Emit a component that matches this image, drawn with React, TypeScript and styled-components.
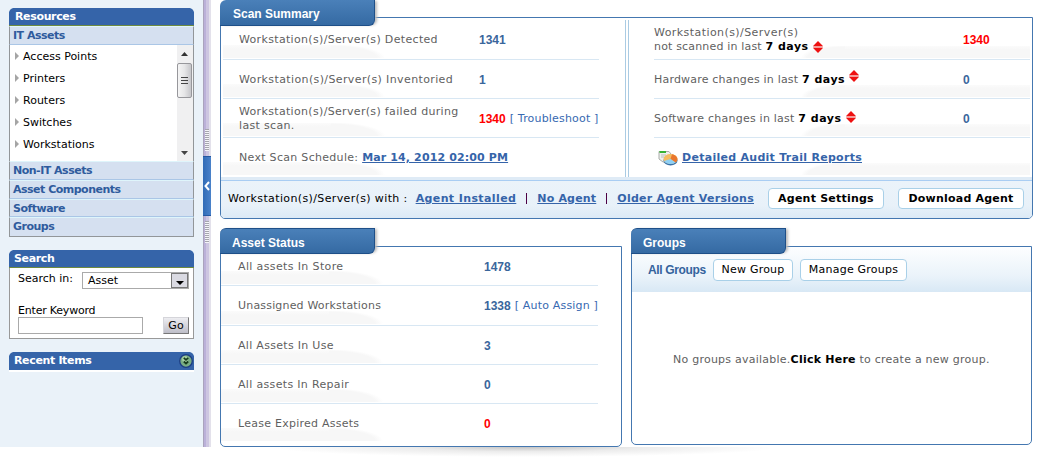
import type { ReactNode } from 'react'
import styled, { createGlobalStyle, css } from 'styled-components'

const verdana = `Verdana, 'DejaVu Sans', sans-serif`
const arial = `'Liberation Sans', Arial, sans-serif`

const resources = ['Access Points', 'Printers', 'Routers', 'Switches', 'Workstations']

const assetStatus = [
  { label: 'All assets In Store', value: '1478', spacing: 0.37 },
  { label: 'Unassigned Workstations', value: '1338', action: 'Auto Assign', spacing: 0.18 },
  { label: 'All Assets In Use', value: '3', spacing: 0.3 },
  { label: 'All assets In Repair', value: '0', spacing: 0.33 },
  { label: 'Lease Expired Assets', value: '0', alert: true, spacing: 0.25 },
]

const UpDown = ({ drop = 0 }: { drop?: number }) => (
  <Arrows $drop={drop} width="10" height="12" viewBox="0 0 10 12">
    <path d="M5 0 L9.7 4.7 V5.6 H0.3 V4.7 Z M0.3 6.4 H9.7 V7.3 L5 12 L0.3 7.3 Z" fill="#ee1111" />
    <path d="M0.3 6 H9.7" stroke="#f3b0ac" />
  </Arrows>
)

const ReportIcon = () => (
  <svg width="20" height="16" viewBox="0 0 20 16">
    <path d="M1 1.5 H11 L13 4 V12 H5 L1 9 Z" fill="#eef0ee" stroke="#a9aca9" />
    <path d="M1.5 1 H8 V3 H1.5 Z" fill="#35b234" />
    <path d="M3 5 H8 M3 7 H6" stroke="#b9bdb9" />
    <ellipse cx="12.5" cy="10.5" rx="7" ry="5" fill="#3c72a8" />
    <ellipse cx="12.5" cy="9" rx="7" ry="5" fill="#f3bd63" />
    <path d="M12.5 9 L14 4.2 A7 5 0 0 1 17.5 12.5 Z" fill="#e9772d" />
    <path d="M12.5 9 L17.5 12.5 A7 5 0 0 1 6 11 Z" fill="#8ed0f5" />
  </svg>
)

const ExpandIcon = () => (
  <svg width="14" height="14" viewBox="0 0 14 14">
    <circle cx="7" cy="7" r="6.3" fill="#79ad83" stroke="#1c3c84" strokeWidth="1.3" />
    <circle cx="6" cy="5" r="3" fill="#a4cda1" />
    <path d="M4.8 3.8 L7 5.8 L9.2 3.8 M4.8 7.5 L7 9.5 L9.2 7.5" fill="none" stroke="#173c1e" strokeWidth="1.7" />
  </svg>
)

type PanelProps = { title: string; children: ReactNode; height: number; overlap?: number }

const Panel = ({ title, children, height, overlap = 8 }: PanelProps) => (
  <PanelWrap>
    <Tab $raised={overlap > 8}>{title}</Tab>
    <PanelBody $height={height} $overlap={overlap}>
      {children}
    </PanelBody>
  </PanelWrap>
)

const Sidebar = () => (
  <Side>
    <Box>
      <BoxTitle $indent={6}>Resources</BoxTitle>
      <Category $height={19}>IT Assets</Category>
      <ListArea>
        <List>
          {resources.map((item) => (
            <Item key={item}>
              <svg width="4" height="8" viewBox="0 0 4 8">
                <path d="M0 0 L4 4 L0 8 Z" fill="#a5a5a5" />
              </svg>
              {item}
            </Item>
          ))}
        </List>
        <ScrollBar>
          <svg width="7" height="4" viewBox="0 0 7 4">
            <path d="M0 4 L3.5 0 L7 4 Z" fill="#333" />
          </svg>
          <Thumb>
            <i />
            <i />
            <i />
          </Thumb>
          <svg width="7" height="4" viewBox="0 0 7 4">
            <path d="M0 0 H7 L3.5 4 Z" fill="#444" />
          </svg>
        </ScrollBar>
      </ListArea>
      <Category $height={19}>Non-IT Assets</Category>
      <Category $height={19}>Asset Components</Category>
      <Category $height={18}>Software</Category>
      <Category $height={20}>Groups</Category>
    </Box>

    <Box>
      <BoxTitle $indent={5}>Search</BoxTitle>
      <SearchForm>
        <SearchRow>
          <span>Search in:</span>
          <Select>
            Asset
            <SelectButton>
              <svg width="8" height="4" viewBox="0 0 8 4">
                <path d="M0 0 H8 L4 4 Z" fill="#000" />
              </svg>
            </SelectButton>
          </Select>
        </SearchRow>
        <FieldLabel htmlFor="keyword">Enter Keyword</FieldLabel>
        <KeywordRow>
          <Keyword id="keyword" />
          <Go>Go</Go>
        </KeywordRow>
      </SearchForm>
    </Box>

    <RecentItems>
      Recent Items
      <ExpandIcon />
    </RecentItems>
  </Side>
)

const App = () => (
  <>
    <GlobalStyle />
    <Page>
      <Sidebar />
      <Splitter>
        <Grip />
        <Handle>
          <svg width="6" height="10" viewBox="0 0 6 10">
            <path d="M5 1 L1.5 5 L5 9" fill="none" stroke="#fff" strokeWidth="2" />
          </svg>
        </Handle>
        <Grip />
      </Splitter>
      <Main>
        <Panel title="Scan Summary" height={202} overlap={9}>
          <Summary>
            <Column $side="left">
              <Row $height={40}>
                <Label $spacing={0.33}>Workstation(s)/Server(s) Detected</Label>
                <Value>1341</Value>
              </Row>
              <Row $height={39}>
                <Label $spacing={0.38}>Workstation(s)/Server(s) Inventoried</Label>
                <Value>1</Value>
              </Row>
              <Row $height={39}>
                <Label $spacing={0.33}>
                  Workstation(s)/Server(s) failed during
                  <br />
                  last scan.
                </Label>
                <Value $alert>1340</Value>
                <Action>[ Troubleshoot ]</Action>
              </Row>
              <Row $height={39} $last>
                <Label $spacing={0.3}>
                  Next Scan Schedule: <Link $spacing={0.13}>Mar 14, 2012 02:00 PM</Link>
                </Label>
              </Row>
            </Column>
            <Divider />
            <Column $side="right">
              <Row $height={40} $side="right">
                <Label $spacing={0.17}>
                  <Wide>Workstation(s)/Server(s)</Wide>
                  <br />
                  not scanned in last <Days>7 days</Days> <UpDown drop={1} />
                </Label>
                <Value $alert>1340</Value>
              </Row>
              <Row $height={39} $side="right">
                <Label $spacing={0.19}>
                  Hardware changes in last <Days>7 days</Days> <UpDown drop={-1} />
                </Label>
                <Value>0</Value>
              </Row>
              <Row $height={39} $side="right">
                <Label $spacing={0.23}>
                  Software changes in last <Days>7 days</Days> <UpDown />
                </Label>
                <Value>0</Value>
              </Row>
              <Row $height={39} $side="right" $last>
                <Report>
                  <ReportIcon />
                  <Link $spacing={0.28}>Detailed Audit Trail Reports</Link>
                </Report>
              </Row>
            </Column>
          </Summary>
          <AgentBar>
            <AgentLabel>Workstation(s)/Server(s) with :</AgentLabel>
            <AgentLinks>
              <Link $spacing={0.39}>Agent Installed</Link>
              <Pipe />
              <Link $spacing={0.18}>No Agent</Link>
              <Pipe />
              <Link $spacing={0.26}>Older Agent Versions</Link>
            </AgentLinks>
            <AgentButtons>
              <Button $bold $width={116}>
                Agent Settings
              </Button>
              <Button $bold $width={126}>
                Download Agent
              </Button>
            </AgentButtons>
          </AgentBar>
        </Panel>

        <Bottom>
          <Panel title="Asset Status" height={201}>
            <StatusRows>
              {assetStatus.map(({ label, value, action, alert, spacing }, i) => (
                <Row key={label} $height={i === 1 ? 40 : 39} $last={i === 4} $pad={17}>
                  <Label $spacing={spacing}>{label}</Label>
                  <Value $alert={alert}>{value}</Value>
                  {action && <Action>[ {action} ]</Action>}
                </Row>
              ))}
            </StatusRows>
          </Panel>
          <Panel title="Groups" height={199}>
            <GroupBar>
              <GroupTitle>All Groups</GroupTitle>
              <Button $width={80}>New Group</Button>
              <Button $width={107}>Manage Groups</Button>
            </GroupBar>
            <Empty>
              No groups available.<b>Click Here</b> to create a new group.
            </Empty>
          </Panel>
        </Bottom>
        <Shadow />
      </Main>
    </Page>
  </>
)

export default App

const GlobalStyle = createGlobalStyle`
  * {
    box-sizing: border-box;
  }
  body {
    margin: 0;
    background: #fff;
    font-family: ${verdana};
    font-size: 11px;
    line-height: 14px;
    color: #5f5f5f;
    overflow: hidden;
  }
  b {
    color: #000;
  }
`

const Page = styled.div`
  display: flex;
  width: 1037px;
  height: 457px;
  overflow: hidden;
`

const Side = styled.aside`
  display: flex;
  flex-direction: column;
  gap: 13px;
  width: 203px;
  height: 447px;
  padding: 8px 9px;
  background: #eaf2f9;
  color: #000;
`

const Box = styled.section`
  width: 185px;
`

const titleStyle = css`
  background: #3564a9;
  color: #fff;
  font-weight: bold;
  letter-spacing: -0.35px;
  clip-path: polygon(0 4px, 1px 2px, 2px 1px, 4px 0, calc(100% - 4px) 0, calc(100% - 2px) 1px, calc(100% - 1px) 2px, 100% 4px, 100% 100%, 0 100%);
`

const BoxTitle = styled.h2<{ $indent: number }>`
  ${titleStyle}
  height: 18px;
  margin: 0;
  padding-left: ${({ $indent }) => $indent}px;
  font-size: 11px;
  line-height: 18px;
  border-bottom: 1px solid #6f8a3f;
`

const Category = styled.div<{ $height: number }>`
  height: ${({ $height }) => $height}px;
  padding-left: 3px;
  line-height: 18px;
  font-weight: bold;
  letter-spacing: -0.5px;
  color: #2f5b9d;
  background: #d5e0f0;
  border: 1px solid #aac6e6;
  border-top-color: #dff5fb;
  border-left-color: #929699;
  border-right-color: #929699;

  &:last-child {
    border-bottom-color: #929699;
  }
`

const ListArea = styled.div`
  display: flex;
  justify-content: space-between;
  height: 116px;
  background: #fff;
  border: solid #929699;
  border-width: 0 1px;
`

const List = styled.div`
  padding-top: 1px;
`

const Item = styled.div`
  display: flex;
  align-items: center;
  gap: 4px;
  height: 22px;
  padding-left: 5px;

  svg {
    margin-top: -2px;
  }
`

const ScrollBar = styled.div`
  display: flex;
  flex-direction: column;
  align-items: center;
  width: 16px;
  padding: 7px 1px 6px 0;
  background: #f0f0f1;

  > svg:last-child {
    margin-top: auto;
  }
`

const Thumb = styled.div`
  display: flex;
  flex-direction: column;
  align-items: center;
  justify-content: center;
  gap: 2px;
  width: 15px;
  height: 35px;
  margin-top: 7px;
  background: linear-gradient(90deg, #f5f5f5, #e6e6e7 50%, #c6c6ca);
  border: 1px solid #97979b;
  border-radius: 2px;

  i {
    width: 7px;
    height: 1px;
    background: #444;
  }
`

const SearchForm = styled.div`
  height: 71px;
  padding: 4px 4px 0 8px;
  background: #fff;
  border: 1px solid #999;
  border-top: 0;
`

const SearchRow = styled.div`
  display: flex;
  justify-content: space-between;
  height: 32px;
`

const Select = styled.div`
  display: flex;
  align-items: center;
  justify-content: space-between;
  width: 107px;
  height: 17px;
  padding-left: 5px;
  border: 1px solid #aaa;
`

const SelectButton = styled.span`
  display: flex;
  align-items: flex-end;
  justify-content: center;
  width: 17px;
  height: 15px;
  padding-bottom: 2px;
  background: #dadae2;
  border: 1px solid #777;
`

const FieldLabel = styled.label`
  display: block;
  height: 13px;
  letter-spacing: -0.2px;
`

const KeywordRow = styled.div`
  display: flex;
  justify-content: space-between;
`

const Keyword = styled.input`
  width: 125px;
  height: 17px;
  margin: 0;
  border: 1px solid #aaa;
`

const Go = styled.button`
  width: 26px;
  height: 17px;
  padding: 0;
  font: 11px/14px ${verdana};
  color: #000;
  background: linear-gradient(#ededf1, #bebec8);
  border: 1px solid #d5d5da;
  border-right-color: #777;
  border-bottom-color: #777;
`

const RecentItems = styled.div`
  ${titleStyle}
  display: flex;
  align-items: center;
  justify-content: space-between;
  width: 185px;
  height: 20px;
  padding: 0 1px 0 5px;
  border-bottom: 2px solid #fff;
`

const Splitter = styled.div`
  display: flex;
  flex-direction: column;
  width: 8px;
  height: 447px;
  padding-top: 129px;
  background: linear-gradient(90deg, #aaa3bd 0 1px, #bbb1d9 1px 3px, #cdc6e1 3px 6px, #e3e1eb 6px);
`

const Grip = styled.div`
  width: 4px;
  height: 22px;
  margin: 0 0 5px 2px;
  background: repeating-linear-gradient(#a6a6ae 0 1px, #f4f4f8 1px 2px);

  &:last-child {
    margin-top: 5px;
  }
`

const Handle = styled.div`
  display: flex;
  align-items: center;
  justify-content: center;
  height: 60px;
  background: linear-gradient(90deg, #316bb6, #4a82ca);
  border: 1px solid #2458a2;
  border-width: 1px 0;
`

const Main = styled.main`
  display: flex;
  flex-direction: column;
  width: 826px;
  padding: 0 4px 0 9px;
`

const PanelWrap = styled.section`
  min-width: 0;
`

const Tab = styled.h2<{ $raised: boolean }>`
  position: relative;
  z-index: 1;
  width: 155px;
  height: 26px;
  margin: 0;
  padding-left: ${({ $raised }) => ($raised ? 13 : 12)}px;
  font: bold 12px/28px ${arial};
  color: #fff;
  background: linear-gradient(#4a80b9, #356aa3);
  border: 1px solid #1e4f88;
  border-width: ${({ $raised }) => ($raised ? 0 : 1)}px 1px 1px 0;
  border-radius: 6px 0 6px 0;
  box-shadow: 3px 0 3px -1px #bbb;
`

const PanelBody = styled.div<{ $height: number; $overlap: number }>`
  height: ${({ $height }) => $height}px;
  margin-top: -${({ $overlap }) => $overlap}px;
  border: 1px solid #4477b0;
  border-radius: 0 0 5px 5px;
  overflow: hidden;
`

const Summary = styled.div`
  display: flex;
  height: 159px;
  padding: 2px 1px 0 2px;
`

const Column = styled.div<{ $side: 'left' | 'right' }>`
  width: 376px;
  margin-left: ${({ $side }) => ($side === 'right' ? 25 : 0)}px;
`

const Divider = styled.div`
  width: 4px;
  height: 157px;
  margin-left: 26px;
  border: solid #aacbe3;
  border-width: 0 1px;
`

const Label = styled.span<{ $spacing: number }>`
  line-height: 14px;
  letter-spacing: ${({ $spacing }) => $spacing}px;
  white-space: nowrap;
`

const Wide = styled.span`
  letter-spacing: 0.43px;
`

const Days = styled.b`
  letter-spacing: 0.5px;
`

const Value = styled.span<{ $alert?: boolean }>`
  font: bold 12px/14px ${arial};
  color: ${({ $alert }) => ($alert ? '#f00' : '#3a669c')};
`

const shadeLeft = css`
  background:
    radial-gradient(ellipse 54px 14px at left bottom, #f7f7f7 85%, #f7f7f700) 108px calc(100% - 1px) / 55px 13px no-repeat,
    linear-gradient(#fbfbfb, #f7f7f7 30%) 0 calc(100% - 1px) / 108px 13px no-repeat;
`

const shadeRight = css`
  background:
    radial-gradient(ellipse 44px 13px at right bottom, #f7f7f7 85%, #f7f7f700) 146px calc(100% - 1px) / 45px 12px no-repeat,
    linear-gradient(#fbfbfb, #f7f7f7 30%) 191px calc(100% - 1px) / 185px 12px no-repeat;
`

const Row = styled.div<{ $height: number; $side?: 'right'; $last?: boolean; $pad?: number }>`
  display: flex;
  align-items: center;
  height: ${({ $height }) => $height}px;
  padding-top: ${({ $height }) => ($height === 39 ? 1 : 0)}px;
  padding-left: ${({ $side, $pad }) => ($side ? 0 : $pad ?? 16)}px;
  ${({ $side }) => ($side ? shadeRight : shadeLeft)}
  border-bottom: 1px solid ${({ $last }) => ($last ? 'transparent' : '#d8e7f3')};
  white-space: nowrap;

  > ${Label} {
    flex: none;
    width: ${({ $side, $pad }) => ($side ? 309 : $pad ? 246 : 240)}px;
  }
`

const Action = styled.span`
  margin-left: 4px;
  letter-spacing: 0.18px;
  color: #3769b1;
`

const Link = styled.a<{ $spacing: number }>`
  color: #3564a9;
  font-weight: bold;
  letter-spacing: ${({ $spacing }) => $spacing}px;
  text-decoration: underline;
`

const Arrows = styled.svg<{ $drop: number }>`
  margin: -4px 0 ${({ $drop }) => -$drop}px 0.5px;
  vertical-align: ${({ $drop }) => -1 - $drop}px;
`

const Report = styled.div`
  display: flex;
  align-items: center;
  gap: 4px;
  padding-left: 4px;
`

const AgentBar = styled.div`
  display: flex;
  align-items: center;
  height: 41px;
  padding: 2px 8px 0 7px;
  color: #000;
  background: linear-gradient(#dfebf6 0 3px, #a9cdf3 3px 4px, #ebf3fa 4px, #e8f1f9 70%, #dceaf6);
`

const AgentLabel = styled.span`
  letter-spacing: 0.37px;
`

const AgentLinks = styled.div`
  display: flex;
  align-items: center;
  margin-left: 8px;
`

const Pipe = styled.i`
  width: 1px;
  height: 11px;
  margin: 0 10px;
  background: #4c0044;
`

const AgentButtons = styled.div`
  display: flex;
  gap: 14px;
  margin-left: auto;
`

const Button = styled.button<{ $bold?: boolean; $width: number }>`
  width: ${({ $width }) => $width}px;
  height: ${({ $bold }) => ($bold ? 21 : 22)}px;
  padding: 0;
  font: ${({ $bold }) => ($bold ? 'bold' : 'normal')} 11px/14px ${verdana};
  letter-spacing: 0.22px;
  color: #000;
  background: #fff;
  border: 1px solid #a9d0e8;
  border-radius: 4px;
  white-space: nowrap;
`

const Bottom = styled.div`
  display: grid;
  grid-template-columns: 402px 401px;
  gap: 9px;
  height: 219px;
  margin-top: 9px;
`

const StatusRows = styled.div`
  width: 377px;

  ${Row} {
    padding-top: 2px;
  }
  ${Row}:nth-child(2) {
    padding-top: 0;
  }
`

const GroupBar = styled.div`
  display: flex;
  align-items: center;
  gap: 7px;
  height: 45px;
  padding: 1px 0 0 16px;
  background: linear-gradient(#fdfeff, #eaf3fa 65%, #d8e8f5);
`

const GroupTitle = styled.span`
  width: 58px;
  font: bold 12px/14px ${arial};
  letter-spacing: -0.35px;
  color: #34639d;
  white-space: nowrap;
`

const Empty = styled.div`
  padding: 61px 0 0 41px;
  letter-spacing: 0.24px;
  white-space: nowrap;
`

const Shadow = styled.div`
  width: 510px;
  height: 10px;
  margin-left: 40px;
  background: radial-gradient(ellipse 50% 100% at 52% 0, #c4c4c4, #ececec 45%, #fff0);
`
